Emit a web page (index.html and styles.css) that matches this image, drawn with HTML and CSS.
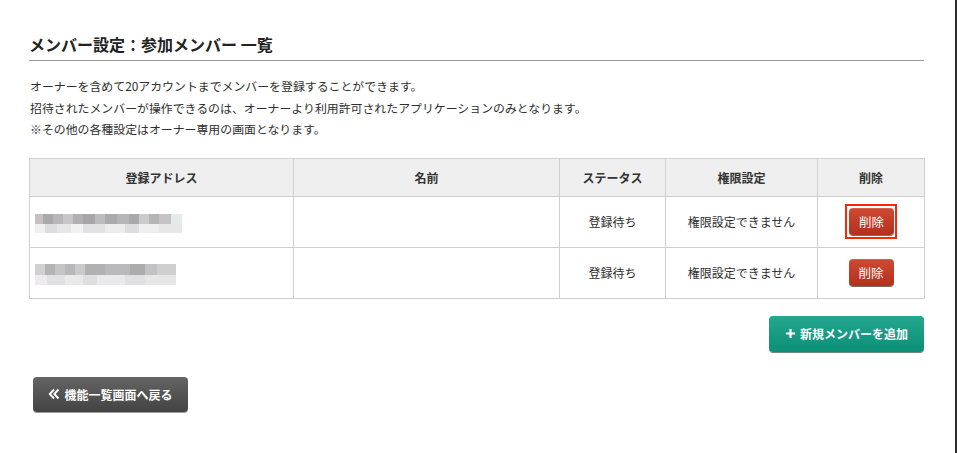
FILE: index.html
```html
<!DOCTYPE html>
<html lang="ja">
<head>
<meta charset="utf-8">
<title>メンバー設定</title>
<link rel="stylesheet" href="styles.css">
</head>
<body>
<div class="frame">
  <div class="content">
    <h1 class="title">メンバー設定：参加メンバー 一覧</h1>
    <div class="intro">
      <p>オーナーを含めて20アカウントまでメンバーを登録することができます。</p>
      <p>招待されたメンバーが操作できるのは、オーナーより利用許可されたアプリケーションのみとなります。</p>
      <p>※その他の各種設定はオーナー専用の画面となります。</p>
    </div>
    <table class="members">
      <colgroup>
        <col class="c-addr"><col class="c-name"><col class="c-status"><col class="c-perm"><col class="c-del">
      </colgroup>
      <thead>
        <tr><th>登録アドレス</th><th>名前</th><th>ステータス</th><th>権限設定</th><th>削除</th></tr>
      </thead>
      <tbody>
        <tr>
          <td class="addr"><div class="blur blur-a"><span class="b-top"></span><span class="b-bot"></span></div></td>
          <td></td>
          <td>登録待ち</td>
          <td>権限設定できません</td>
          <td><span class="highlight"><button class="btn-del">削除</button></span></td>
        </tr>
        <tr>
          <td class="addr"><div class="blur blur-b"><span class="b-top"></span><span class="b-bot"></span></div></td>
          <td></td>
          <td>登録待ち</td>
          <td>権限設定できません</td>
          <td><button class="btn-del">削除</button></td>
        </tr>
      </tbody>
    </table>
    <div class="actions">
      <button class="btn-add"><svg class="ico-plus" viewBox="0 0 12 12" width="11" height="11"><path d="M6 1v10M1 6h10" stroke="#fff" stroke-width="2.4" fill="none"/></svg>新規メンバーを追加</button>
    </div>
    <div class="back-row">
      <button class="btn-back"><svg class="ico-back" viewBox="0 0 12 12" width="12" height="12"><path d="M6 1.5L1.8 6 6 10.5M10.5 1.5L6.3 6l4.2 4.5" stroke="#fff" stroke-width="1.9" fill="none"/></svg>機能一覧画面へ戻る</button>
    </div>
  </div>
</div>
</body>
</html>
```
FILE: styles.css
```css
* { box-sizing: border-box; }
html, body { margin: 0; padding: 0; background: #fff; }
body {
  font-family: "Noto Sans CJK JP", "Noto Sans", sans-serif;
  color: #333;
  font-size: 12px;
}
.frame {
  width: 957px;
  height: 453px;
  border-right: 2px solid #2d2d2d;
  overflow: hidden;
  padding-right: 1px;
}
.content {
  margin-left: 29px;
  width: 895px;
  padding-top: 32px;
}
.title {
  margin: 0;
  font-size: 16px;
  font-weight: bold;
  line-height: 24px;
  padding-bottom: 4px;
  border-bottom: 1px solid #9a9a9a;
  color: #222;
}
.intro {
  margin-top: 14px;
  padding-left: 1px;
}
.intro p {
  margin: 0;
  font-size: 11.9px;
  line-height: 21.5px;
  color: #2e2e2e;
}
.members {
  margin-top: 18px;
  width: 895px;
  border-collapse: collapse;
  table-layout: fixed;
}
.c-addr { width: 264px; }
.c-name { width: 266px; }
.c-status { width: 106px; }
.c-perm { width: 152px; }
.c-del { width: 107px; }
.members th, .members td {
  border: 1px solid #cfcfcf;
  text-align: center;
  font-size: 12px;
  padding: 0;
}
.members th {
  background: #efefef;
  height: 38px;
  font-weight: bold;
  color: #333;
}
.members td {
  height: 51px;
  color: #2e2e2e;
}
.members td.addr { text-align: left; padding-left: 5px; }
.blur { display: flex; flex-direction: column; }
.blur span { display: block; }
.blur-a .b-top {
  width: 147px; height: 10px; margin-top: 3px;
  background: linear-gradient(90deg, #c4c0c4 0 8px, #aaa8ab 8px 18px, #b8b6b8 18px 28px, #c8c6c8 28px 38px, #b2b0b3 38px 48px, #a6a5a8 48px 60px, #bdbbbd 60px 70px, #abaaac 70px 82px, #b6b5b7 82px 94px, #a9a9ab 94px 104px, #cbcbcb 104px 114px, #b5b4b6 114px 124px, #c3c3c4 124px 136px, #e4e9ea 136px 147px);
}
.blur-a .b-bot {
  width: 147px; height: 9px;
  background: linear-gradient(90deg, #f0f0f0 0 10px, #dedcde 10px 22px, #e6e5e7 22px 36px, #f1f1f1 36px 48px, #e2e1e3 48px 70px, #ededed 70px 90px, #dddcdf 90px 104px, #efefef 104px 124px, #e7e7e8 124px 147px);
}
.blur-b .b-top {
  width: 141px; height: 11px; margin-top: 3px;
  background: linear-gradient(90deg, #d2d0d2 0 10px, #b4b2b5 10px 20px, #c6c5c6 20px 30px, #b8b7b9 30px 40px, #cbcaca 40px 50px, #b1b0b2 50px 70px, #b9b8ba 70px 95px, #adacad 95px 110px, #c2c1c3 110px 122px, #cfcfcf 122px 141px);
}
.blur-b .b-bot {
  width: 141px; height: 10px;
  background: linear-gradient(90deg, #ececec 0 12px, #e1e0e2 12px 30px, #eaeaeb 30px 48px, #dedddf 48px 62px, #e9e8ea 62px 90px, #e0dfe1 90px 110px, #e6e6e7 110px 141px);
}
.highlight {
  display: inline-block;
  outline: 2px solid #f2290b;
  padding: 2px 1px 2px 2px;
  line-height: 0;
}
.btn-del {
  font-family: inherit;
  width: 45px;
  height: 27px;
  border: none;
  border-radius: 4px;
  background: linear-gradient(#cf4a32, #b3301e);
  box-shadow: 0 1px 0 #7d6b66, inset 0 1px 0 rgba(255,255,255,0.12);
  color: #fff;
  font-size: 12.5px;
  padding: 0;
  cursor: pointer;
  line-height: 27px;
}
.actions {
  display: flex;
  justify-content: flex-end;
  margin-top: 17px;
}
.btn-add {
  font-family: inherit;
  display: flex;
  align-items: center;
  justify-content: center;
  gap: 4px;
  width: 155px;
  height: 36px;
  border: none;
  border-radius: 4px;
  background: linear-gradient(#23a88f, #0b8f77);
  box-shadow: 0 1px 0 #6e8c85;
  color: #fff;
  font-size: 12px;
  font-weight: bold;
  padding: 0;
}
.ico-plus { display: block; }
.back-row {
  margin-top: 25px;
  padding-left: 4px;
}
.btn-back {
  font-family: inherit;
  display: flex;
  align-items: center;
  justify-content: center;
  gap: 4px;
  width: 155px;
  height: 35px;
  border: none;
  border-radius: 4px;
  background: linear-gradient(#646464, #434343);
  box-shadow: 0 1px 0 #9a9a9a;
  color: #fff;
  font-size: 12px;
  font-weight: bold;
  padding: 0;
}
.ico-back { display: block; }
```
